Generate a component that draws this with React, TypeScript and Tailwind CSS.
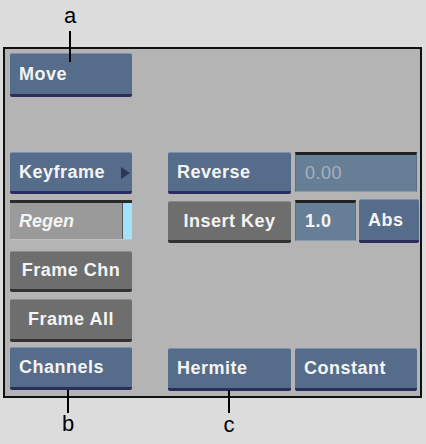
import React from 'react';

const font = { fontFamily: '"Liberation Sans", Arial, sans-serif' };

function BlueButton({ label, className = '', arrow = false }: { label: string; className?: string; arrow?: boolean }) {
  return (
    <div
      className={`relative flex items-center pl-[9px] bg-[#556c8b] border-t border-t-[#7b91ad] border-b-[3px] border-b-[#2b2e5c] rounded-[2px] text-[18px] font-bold tracking-[0.5px] text-[#f4f4f4] ${className}`}
    >
      {label}
      {arrow && (
        <svg className="absolute right-[2px] top-[14px]" width="9" height="12" viewBox="0 0 9 12">
          <path d="M0 0 L9 6 L0 12 Z" fill="#2d3858" />
        </svg>
      )}
    </div>
  );
}

function GrayButton({ label, className = '' }: { label: string; className?: string }) {
  return (
    <div
      className={`flex items-center justify-center bg-[#6e6e6e] border-t border-t-[#8c8c8c] border-b-[3px] border-b-[#333] rounded-[2px] text-[18px] font-bold tracking-[0.5px] text-[#f4f4f4] ${className}`}
    >
      {label}
    </div>
  );
}

function Field({ value, dim = false, className = '' }: { value: string; dim?: boolean; className?: string }) {
  return (
    <div
      className={`flex items-center pl-[9px] bg-[#677e97] border-t-[3px] border-t-[#222] border-b border-b-[#8a9bb0] border-x border-x-[#5a6f86] text-[18px] tracking-[0.5px] ${dim ? 'text-[#a7b0ba] font-normal' : 'text-[#f4f4f4] font-bold'} ${className}`}
    >
      {value}
    </div>
  );
}

export default function App() {
  return (
    <div className="relative w-[426px] h-[444px] bg-[#dcdcdc] overflow-hidden" style={font}>
      {/* panel */}
      <div className="absolute left-[3px] top-[47px] w-[419px] h-[351px] bg-[#b4b4b4] border-2 border-[#111] flex">
        {/* left column */}
        <div className="ml-[5px] w-[122px] flex flex-col">
          <BlueButton label="Move" className="mt-[4px] h-[44px]" />
          <BlueButton label="Keyframe" arrow className="mt-[55px] h-[42px]" />
          <div className="mt-[6px] h-[40px] flex bg-[#9a9a9a] border-t-[3px] border-t-[#2a2a2a] border-b border-b-[#c0c0c0]">
            <div className="flex-1 flex items-center pl-[9px] italic font-bold text-[18px] text-[#f4f4f4]">Regen</div>
            <div className="w-[10px] bg-[#a0e2ff] border-l border-l-[#555]" />
          </div>
          <GrayButton label="Frame Chn" className="mt-[11px] h-[41px]" />
          <GrayButton label="Frame All" className="mt-[7px] h-[43px]" />
          <BlueButton label="Channels" className="mt-[5px] h-[43px]" />
        </div>
        {/* right area */}
        <div className="ml-[36px] w-[251px] flex flex-col">
          <div className="mt-[103px] flex gap-[4px] items-start">
            <BlueButton label="Reverse" className="w-[123px] h-[42px]" />
            <Field value="0.00" dim className="w-[122px] h-[40px]" />
          </div>
          <div className="mt-[5px] flex items-start">
            <GrayButton label="Insert Key" className="mt-[2px] w-[123px] h-[42px]" />
            <Field value="1.0" className="ml-[4px] mt-[1px] w-[61px] h-[41px]" />
            <BlueButton label="Abs" className="ml-[3px] w-[60px] h-[44px] pl-[8px]" />
          </div>
          <div className="mt-auto mb-[5px] flex gap-[4px]">
            <BlueButton label="Hermite" className="w-[123px] h-[43px]" />
            <BlueButton label="Constant" className="w-[122px] h-[43px]" />
          </div>
        </div>
      </div>

      {/* callouts */}
      <div className="absolute left-[62px] top-[5px] w-[16px] text-center text-[22px] leading-[22px] text-black">a</div>
      <div className="absolute left-[69px] top-[31px] w-[2px] h-[31px] bg-black" />
      <div className="absolute left-[67px] top-[390px] w-[2px] h-[23px] bg-black" />
      <div className="absolute left-[60px] top-[413px] w-[16px] text-center text-[22px] leading-[22px] text-black">b</div>
      <div className="absolute left-[228px] top-[390px] w-[2px] h-[23px] bg-black" />
      <div className="absolute left-[221px] top-[414px] w-[16px] text-center text-[22px] leading-[22px] text-black">c</div>
    </div>
  );
}
